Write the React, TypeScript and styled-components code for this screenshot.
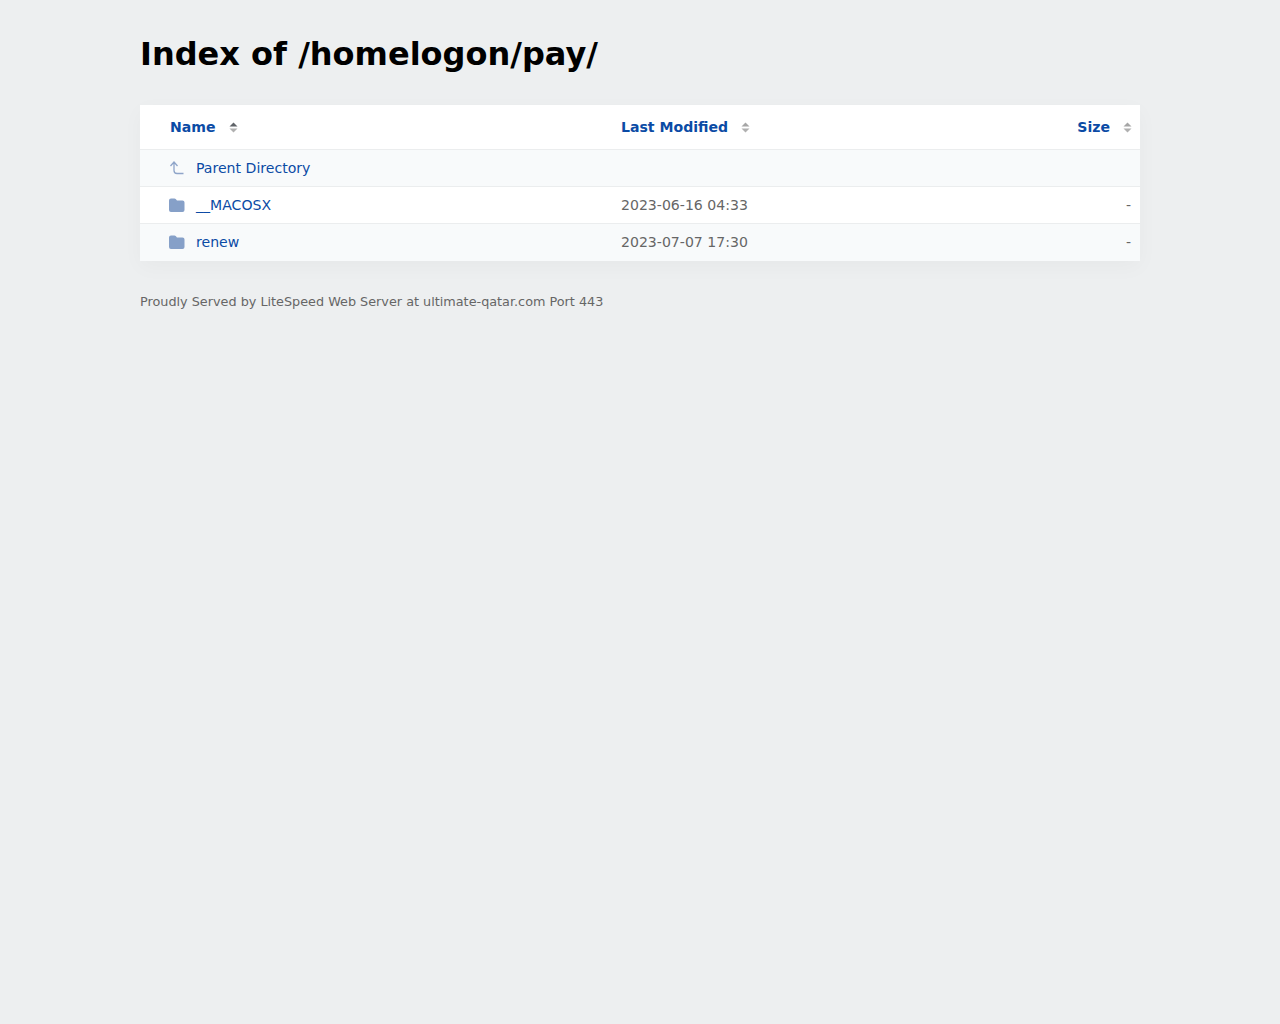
import React from 'react';
import styled, { createGlobalStyle } from 'styled-components';

interface Entry {
  name: string;
  modified: string;
  size: string;
  isParent?: boolean;
}

const ENTRIES: Entry[] = [
  { name: 'Parent Directory', modified: '', size: '', isParent: true },
  { name: '__MACOSX', modified: '2023-06-16 04:33', size: '-' },
  { name: 'renew', modified: '2023-07-07 17:30', size: '-' },
];

const GlobalStyle = createGlobalStyle`
  html, body {
    margin: 0;
    min-height: 100%;
    background: #edeff0;
  }
  body {
    font-family: "DejaVu Sans", sans-serif;
    font-size: 14.08px;
    color: #666;
  }
`;

const Page = styled.main`
  width: 1000px;
  height: 1024px;
  margin: 0 auto;
  box-sizing: border-box;
  padding-top: 33px;
`;

const Title = styled.h1`
  margin: 0 0 30px;
  font-size: 32px;
  line-height: 42px;
  font-weight: 700;
  color: #000;
`;

const Listing = styled.section`
  background: #fff;
  box-shadow: 0 6px 20px rgba(0, 0, 0, 0.03);
`;

const Row = styled.div<{ $striped?: boolean; $header?: boolean }>`
  display: grid;
  grid-template-columns: 451px 1fr 120px;
  align-items: center;
  box-sizing: border-box;
  height: ${({ $header }) => ($header ? '45px' : '37px')};
  background: ${({ $striped }) => ($striped ? '#f8fafb' : '#fff')};
  border-bottom: 1px solid #ebedee;

  &:last-child {
    border-bottom-color: transparent;
  }
`;

const HeaderCell = styled.div<{ $right?: boolean }>`
  display: flex;
  align-items: center;
  justify-content: ${({ $right }) => ($right ? 'flex-end' : 'flex-start')};
  gap: 13px;
  padding-left: ${({ $right }) => ($right ? '0' : '30px')};
  padding-right: ${({ $right }) => ($right ? '8px' : '0')};
  font-weight: 700;
  color: #0b4ba5;
`;

const NameCell = styled.div`
  display: flex;
  align-items: center;
  gap: 11px;
  padding-left: 29px;
`;

const FileLink = styled.a`
  color: #0b4ba5;
  text-decoration: none;
`;

const Cell = styled.div<{ $right?: boolean }>`
  padding-left: ${({ $right }) => ($right ? '0' : '30px')};
  padding-right: ${({ $right }) => ($right ? '9px' : '0')};
  text-align: ${({ $right }) => ($right ? 'right' : 'left')};
`;

const Footer = styled.footer`
  margin-top: 32px;
  font-size: 12.8px;
  line-height: 17px;
  color: #666;
`;

const SortIcon = ({ active }: { active?: boolean }) => (
  <svg width="9" height="11" viewBox="0 0 9 11" aria-hidden="true">
    <path d="M4.5 0.5 8.5 4.5H0.5Z" fill={active ? '#5f6368' : '#a6a6a6'} />
    <path d="M0.5 6.5H8.5L4.5 10.5Z" fill="#b0b0b0" />
  </svg>
);

const FolderIcon = () => (
  <svg width="16" height="14" viewBox="0 0 16 14" aria-hidden="true">
    <path
      d="M2 0.5H5.5Q6.2 0.5 6.7 1L8 2.5H13.5A2 2 0 0 1 15.5 4.5V12A2 2 0 0 1 13.5 14H2A2 2 0 0 1 0 12V2.5A2 2 0 0 1 2 0.5Z"
      fill="#86a0c8"
    />
  </svg>
);

const ParentIcon = () => (
  <svg width="16" height="16" viewBox="0 0 16 16" fill="none" aria-hidden="true">
    <path
      d="M1.5 6 5 2 8.5 6M5 2V10.5A3 3 0 0 0 8 13.5H14.5"
      stroke="#8fa5c9"
      strokeWidth="1.3"
    />
  </svg>
);

const App = () => (
  <>
    <GlobalStyle />
    <Page>
      <Title>Index of /homelogon/pay/</Title>
      <Listing>
        <Row $header>
          <HeaderCell>
            Name <SortIcon active />
          </HeaderCell>
          <HeaderCell>
            Last Modified <SortIcon />
          </HeaderCell>
          <HeaderCell $right>
            Size <SortIcon />
          </HeaderCell>
        </Row>
        {ENTRIES.map((entry, index) => (
          <Row key={entry.name} $striped={index % 2 === 0}>
            <NameCell>
              {entry.isParent ? <ParentIcon /> : <FolderIcon />}
              <FileLink href="#">{entry.name}</FileLink>
            </NameCell>
            <Cell>{entry.modified}</Cell>
            <Cell $right>{entry.size}</Cell>
          </Row>
        ))}
      </Listing>
      <Footer>Proudly Served by LiteSpeed Web Server at ultimate-qatar.com Port 443</Footer>
    </Page>
  </>
);

export default App;
